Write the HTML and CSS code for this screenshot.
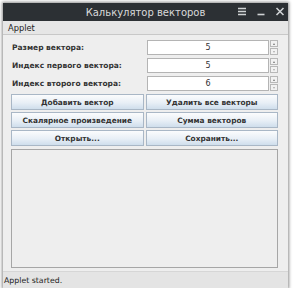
FILE: index.html
```html
<!DOCTYPE html>
<html lang="ru">
<head>
<meta charset="utf-8">
<title>Калькулятор векторов</title>
<link rel="stylesheet" href="styles.css">
</head>
<body>
<div class="window">
  <div class="titlebar">
    <span class="title">Калькулятор векторов</span>
    <div class="controls">
      <svg class="ico" width="10" height="9" viewBox="0 0 10 9"><path d="M1 1.5H9M1 4.5H9M1 7.5H9" stroke="#cfd2d4" stroke-width="1.4"/></svg>
      <svg class="ico" width="10" height="9" viewBox="0 0 10 9"><path d="M1.5 7.5H8.5" stroke="#cfd2d4" stroke-width="1.6"/></svg>
      <svg class="ico" width="10" height="9" viewBox="0 0 10 9"><path d="M1.5 1L8.5 8M8.5 1L1.5 8" stroke="#cfd2d4" stroke-width="1.6"/></svg>
    </div>
  </div>
  <div class="menubar"><span class="menu">Applet</span></div>
  <div class="content">
    <div class="row">
      <span class="label">Размер вектора:</span>
      <div class="spinner"><div class="field">5</div><div class="arrows"><span class="arr up"></span><span class="arr down"></span></div></div>
    </div>
    <div class="row">
      <span class="label">Индекс первого вектора:</span>
      <div class="spinner"><div class="field">5</div><div class="arrows"><span class="arr up"></span><span class="arr down"></span></div></div>
    </div>
    <div class="row">
      <span class="label">Индекс второго вектора:</span>
      <div class="spinner"><div class="field">6</div><div class="arrows"><span class="arr up"></span><span class="arr down"></span></div></div>
    </div>
    <div class="buttons">
      <button class="btn">Добавить вектор</button>
      <button class="btn">Удалить все векторы</button>
      <button class="btn">Скалярное произведение</button>
      <button class="btn">Сумма векторов</button>
      <button class="btn">Открыть...</button>
      <button class="btn">Сохранить...</button>
    </div>
    <div class="output"></div>
  </div>
  <div class="status">Applet started.</div>
</div>
</body>
</html>
```
FILE: styles.css
```css
html, body {
  margin: 0;
  padding: 0;
  background: #ffffff;
}
body {
  padding: 3px 5px 0 3px;
  font-family: "DejaVu Sans", sans-serif;
}
.window {
  width: 285px;
  height: 285px;
  display: flex;
  flex-direction: column;
  background: #eeeeee;
  box-shadow: 0 0 3px 1px rgba(0,0,0,0.45);
}
.titlebar {
  height: 18px;
  background: #2c3034;
  position: relative;
  display: flex;
  align-items: center;
  justify-content: center;
}
.title {
  color: #d9dadb;
  font-size: 10px;
}
.controls {
  position: absolute;
  right: 3px;
  top: 4px;
  display: flex;
  gap: 9px;
}
.ico { display: block; }
.menubar {
  height: 13px;
  background: #e6e6e6;
  border-bottom: 1px solid #c8c8c8;
  display: flex;
  align-items: center;
  padding-left: 5px;
}
.menu {
  font-size: 8.3px;
  color: #222;
}
.content {
  flex: 1;
  padding: 5px 10px 3px 8px;
  display: flex;
  flex-direction: column;
  gap: 3px;
}
.row {
  display: flex;
  align-items: center;
  height: 15px;
}
.label {
  width: 135px;
  font-size: 7.5px;
  font-weight: bold;
  color: #333;
  padding-left: 1px;
}
.spinner {
  flex: 1;
  display: flex;
  height: 15px;
  gap: 1px;
}
.field {
  flex: 1;
  background: #ffffff;
  border: 1px solid #b4b4b4;
  font-size: 8px;
  color: #333;
  display: flex;
  align-items: center;
  justify-content: center;
}
.arrows {
  width: 8px;
  display: flex;
  flex-direction: column;
  gap: 1px;
}
.arr {
  flex: 1;
  border: 1px solid #b8b8b8;
  background: #f2f2f2;
  position: relative;
}
.arr::after {
  content: "";
  position: absolute;
  left: 1.5px;
  top: 1.5px;
  border-left: 1.5px solid transparent;
  border-right: 1.5px solid transparent;
}
.up::after { border-bottom: 2px solid #777; }
.down::after { border-top: 2px solid #aaa; }
.buttons {
  display: grid;
  grid-template-columns: 1fr 1fr;
  grid-auto-rows: 16px;
  gap: 2px 2px;
}
.btn {
  margin: 0;
  padding: 0;
  font-family: "DejaVu Sans", sans-serif;
  font-size: 7.4px;
  font-weight: bold;
  color: #333;
  border: 1px solid #a9b7c6;
  background: linear-gradient(#fbfcfd, #e8eff6 55%, #cfdeec);
}
.output {
  flex: 1;
  border: 1px solid #a6a6a6;
  background: #eeeeee;
}
.status {
  height: 16px;
  background: #e4e4e4;
  border-top: 1px solid #d6d6d6;
  font-size: 7.8px;
  color: #222;
  display: flex;
  align-items: center;
  padding-left: 1px;
}
```
